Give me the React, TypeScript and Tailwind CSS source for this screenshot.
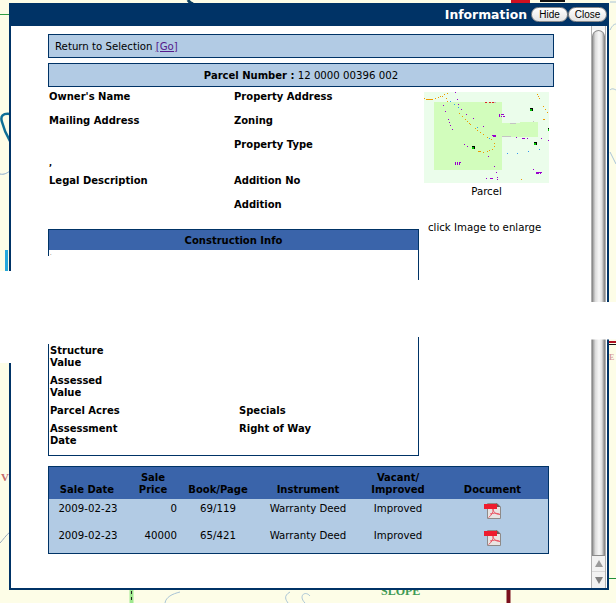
const orangeDots = [[12,28],[46,28],[55,25],[61,22],[67,20],[72,16],[80,13],[88,7],[79,27],[82,37],[118,73],[127,82],[136,91],[142,97],[147,102],[151,106],[166,118],[171,123],[181,130],[190,136],[202,145],[212,151],[223,163],[223,172],[217,180],[208,184],[201,187],[190,190],[349,7],[351,15],[355,22],[358,28],[370,52],[376,61],[382,70],[304,270]];
const purpleDots = [[61,7],[106,10],[112,31],[70,49],[76,67],[85,91],[88,100],[91,109],[97,121],[115,46],[124,61],[139,76],[160,88],[190,112],[133,166],[142,172],[205,202],[223,232],[229,250],[199,268],[232,265],[232,271],[289,145],[322,148],[364,148],[385,154],[340,241]];
const blueDots = [[91,37],[103,46],[115,55],[172,115],[208,148],[262,193],[292,193],[325,187],[358,181]];
const blocks = [[331,61],[384,121],[343,163],[157,175]];
const bars = [
  [18,30,21,"#ee9900"],[174,187,10,"#ee9900"],[369,91,7,"#ee9900"],
  [195,40,6,"#dd2222"],[207,40,6,"#dd2222"],[216,40,6,"#dd2222"],[222,40,6,"#bbbbbb"],
  [270,103,18,"#c4c4c4"],[246,142,27,"#c4c4c4"],[339,97,3,"#c4c4c4"],
  [238,76,3,"#9900cc"],[244,76,9,"#9900cc"],[244,82,3,"#9900cc"],[250,82,6,"#9900cc"],
  [238,79,3,"#9900cc"],[238,82,3,"#9900cc"],
  [217,139,11,"#9900cc"],[220,142,8,"#9900cc"],[306,148,9,"#9900cc"],[211,268,8,"#9900cc"],
  [105,220,3,"#9900cc"],[111,220,3,"#9900cc"],[117,220,6,"#9900cc"],[105,223,3,"#9900cc"],[111,223,3,"#9900cc"],[117,223,3,"#9900cc"],[105,226,3,"#9900cc"],[111,226,3,"#9900cc"],[117,226,3,"#9900cc"],
  [348,250,18,"#9900cc"],[348,253,9,"#9900cc"],[360,253,3,"#9900cc"],
] as const;

// reference dots were read off a 3x crop, so scale them back to whole pixels
const px = (v: number) => Math.round((v - 12) / 3);
const py = (v: number) => Math.round((v - 9) / 3);

function ParcelImage() {
  return (
    <svg width="125" height="91" viewBox="0 0 125 91" shapeRendering="crispEdges" className="block">
      <rect width="125" height="91" fill="#ebfdeb" />
      <path d="M10 10H78V31L114 30V45H78V78H10Z" fill="#d2fdbc" />
      {orangeDots.map(([x, y], i) => <rect key={i} x={px(x)} y={py(y)} width="1" height="1" fill="#ee9900" />)}
      {purpleDots.map(([x, y], i) => <rect key={i} x={px(x)} y={py(y)} width="1" height="1" fill="#9900cc" />)}
      {blueDots.map(([x, y], i) => <rect key={i} x={px(x)} y={py(y)} width="1" height="1" fill="#3399ee" />)}
      {bars.map(([x, y, w, c], i) => <rect key={i} x={px(x)} y={py(y)} width={Math.max(1, Math.round(w / 3))} height="1" fill={c} />)}
      {blocks.map(([x, y], i) => (
        <g key={i}>
          <rect x={px(x)} y={py(y) - 1} width="3" height="3" fill="#000000" />
          <rect x={px(x)} y={py(y)} width="2" height="2" fill="#00cc00" />
        </g>
      ))}
    </svg>
  );
}

function PdfIcon() {
  return (
    <svg width="17" height="17" viewBox="0 0 17 17" className="block mx-auto">
      <path d="M3.500 1.500H13L16.500 5V16.500H3.500Z" fill="#e9e4e2" stroke="#8e8a88" />
      <path d="M12.500 1L16.500 5H12.500Z" fill="#6b5a58" />
      <rect x="0" y="2" width="13" height="5" fill="#ee1c2e" />
      <path d="M9 7C9.500 10 8 13 4.500 15.500M9 7C9 10 12 12.500 16 12.500M6 12C9 11 12 11 15.500 12" fill="none" stroke="#ea5a68" strokeWidth="1" />
    </svg>
  );
}

const sales = [
  { date: "2009-02-23", price: "0", page: "69/119" },
  { date: "2009-02-23", price: "40000", page: "65/421" },
];

export default function App() {
  return (
    <div className="relative w-[616px] h-[603px] overflow-hidden bg-[#fdfde7] font-['DejaVu_Sans',Verdana,sans-serif] text-[10.2px] leading-[12px] text-black">
      {/* map behind the window */}
      <svg className="absolute inset-0" width="616" height="603" viewBox="0 0 616 603" fill="none">
        <path d="M0 14.500H10" stroke="#2f9e44" />
        <path d="M188 0C189 2 190 3 193 4" stroke="#0b3f5f" strokeWidth="3" />
        <path d="M10 114C3 113 0 116 2 122C4 130 7 136 10 141" stroke="#0e6f96" strokeWidth="2.500" />
        <path d="M0 174C4 175 7 173 10 171" stroke="#88aacc" />
        <path d="M6.500 250V272" stroke="#25a7dc" strokeWidth="3" />
        <path d="M0 543C3 540 6 535 10 532" stroke="#99aabb" />
        <path d="M131.500 590V603" stroke="#9fe88f" strokeWidth="4" />
        <path d="M131.500 591V603" stroke="#222222" strokeDasharray="3 3" />
        <path d="M165 603C166 597 172 594 180 592M290 592C283 596 286 600 288 603M305 603C298 596 305 590 310 596" stroke="#a9c4d6" />
        <path d="M508.500 590V603" stroke="#7a0f1c" strokeWidth="4" />
        <path d="M608 578.500H616" stroke="#1f8f3a" />
        <path d="M608 342H616" stroke="#b01020" strokeWidth="2" />
        <path d="M608 344.500H616" stroke="#111111" />
        <path d="M511 1.500H530" stroke="#d01020" strokeWidth="3" />
        <path d="M540 1H565" stroke="#111111" strokeWidth="2" />
        <path d="M610 2H616M610 30C612 26 614 24 616 24M610 90C612 88 614 89 616 90M610 152C612 156 614 160 616 164" stroke="#aac4d8" />
      </svg>
      <span className="absolute left-[1px] top-[471px] font-['Liberation_Serif',serif] font-bold text-[11px] text-[#c46a6a]">V</span>
      <span className="absolute left-[381px] top-[585px] font-['Liberation_Serif',serif] font-bold text-[12px] text-[#3f9a55]">SLOPE</span>
      <span className="absolute left-[609px] top-[352px] font-['Liberation_Serif',serif] font-bold text-[8px] text-[#d69a9a]">E</span>

      {/* window */}
      <div className="absolute left-[9px] top-[3px] w-[600px] h-[587px] flex flex-col bg-white border-x-2 border-b-2 border-[#003366]">
        <div className="h-[23px] shrink-0 bg-[#003366] flex items-center justify-end">
          <span className="font-bold text-[12.400px] text-white mr-[4px]">Information</span>
          <button className="h-[15px] w-[37px] rounded-full border border-[#8a8a8a] bg-gradient-to-b from-white to-[#e4e4e4] font-['Liberation_Sans',sans-serif] text-[10px] leading-[13px] text-black">Hide</button>
          <button className="h-[15px] w-[39px] rounded-full border border-[#8a8a8a] bg-gradient-to-b from-white to-[#e4e4e4] font-['Liberation_Sans',sans-serif] text-[10px] leading-[13px] text-black">Close</button>
        </div>

        <div className="flex-1 flex min-h-0">
          <div className="flex-1 pl-[37px] pt-[8px]">
            <div className="w-[506px] h-[24px] flex items-center px-[6px] pt-[1px] bg-[#b2cbe4] border border-[#003366]">
              <span>Return to Selection <a className="text-[#551a8b] underline">[Go]</a></span>
            </div>
            <div className="w-[506px] h-[24px] mt-[5px] pt-[1px] flex items-center justify-center bg-[#b2cbe4] border border-[#003366]">
              <span><b className="text-[10px]">Parcel Number :</b> 12 0000 00396 002</span>
            </div>

            <div className="flex">
              <div className="w-[371px]">
                <div className="grid grid-cols-[185px_1fr] pl-[1px] pt-[4px] font-bold text-[10px]">
                  <div className="h-[24px]">Owner's Name</div>
                  <div className="h-[24px]">Property Address</div>
                  <div className="h-[24px]">Mailing Address</div>
                  <div className="h-[24px]">Zoning</div>
                  <div className="h-[24px]"></div>
                  <div className="h-[24px]">Property Type</div>
                  <div className="h-[12px] col-span-2 text-[8px] leading-[1px]">,</div>
                  <div className="h-[24px]">Legal Description</div>
                  <div className="h-[24px]">Addition No</div>
                  <div className="h-[24px]"></div>
                  <div className="h-[24px]">Addition</div>
                </div>

                <div className="mt-[6px] border border-[#003366]">
                  <div className="h-[20px] pt-[1px] bg-[#3a64aa] flex items-center justify-center font-bold text-[10px]">Construction Info</div>
                  <div className="relative pt-[95px] pb-[8px] pl-[1px]">
                    <span className="absolute left-[1px] top-[-3px] text-[5px]">.</span>
                    <div className="grid grid-cols-[189px_1fr] gap-y-[6px] font-bold text-[10px]">
                      <div className="w-[72px]">Structure Value</div>
                      <div></div>
                      <div className="w-[72px]">Assessed Value</div>
                      <div></div>
                      <div className="whitespace-nowrap">Parcel Acres</div>
                      <div>Specials</div>
                      <div className="w-[72px]">Assessment Date</div>
                      <div>Right of Way</div>
                    </div>
                  </div>
                </div>
              </div>

              <div className="ml-[5px] pt-[5px] w-[125px]">
                <ParcelImage />
                <div className="mt-[3px] text-center">Parcel</div>
                <div className="mt-[24px] ml-[4px] whitespace-nowrap">click Image to enlarge</div>
              </div>
            </div>

            <table className="mt-[10px] w-[501px] table-fixed border border-[#003366] border-separate border-spacing-0 bg-[#b2cbe4]">
              <thead>
                <tr className="h-[32px] bg-[#3a64aa] text-[10px] text-center align-bottom">
                  <th className="w-[76px] pb-[3px] font-bold">Sale Date</th>
                  <th className="w-[56px] pb-[3px] font-bold">Sale<br />Price</th>
                  <th className="w-[74px] pb-[3px] font-bold">Book/Page</th>
                  <th className="w-[106px] pb-[3px] font-bold">Instrument</th>
                  <th className="w-[74px] pb-[3px] font-bold">Vacant/<br />Improved</th>
                  <th className="pb-[3px] pl-[2px] font-bold">Document</th>
                </tr>
              </thead>
              <tbody>
                {sales.map((s) => (
                  <tr key={s.page} className="h-[27px] align-top">
                    <td className="pt-[4px] pl-[2px] text-center">{s.date}</td>
                    <td className="pt-[4px] pr-[4px] text-right">{s.price}</td>
                    <td className="pt-[4px] text-center">{s.page}</td>
                    <td className="pt-[4px] text-center">Warranty Deed</td>
                    <td className="pt-[4px] text-center">Improved</td>
                    <td className="pt-[3px] pl-[2px]"><PdfIcon /></td>
                  </tr>
                ))}
              </tbody>
            </table>
          </div>

          {/* scrollbar */}
          <div className="w-[15px] shrink-0 flex flex-col mr-px border-x border-[#b0b0b0]">
            <div className="h-[4px] shrink-0 bg-[#f4f4f4]"></div>
            <div className="flex-1 rounded-t-full rounded-b-[7px] border border-[#8c8c8c] bg-[linear-gradient(to_right,#a0a0a0_0%,#dcdcdc_22%,#f8f8f8_55%,#e0e0e0_80%,#969696_100%)]"></div>
            <div className="h-[16px] shrink-0 bg-[#f2f2f2] flex items-center justify-center border-b border-[#d8d8d8]">
              <div className="w-0 h-0 border-x-[4px] border-x-transparent border-b-[7px] border-b-[#9a9a9a]"></div>
            </div>
            <div className="h-[16px] shrink-0 bg-[#f2f2f2] flex items-center justify-center">
              <div className="w-0 h-0 border-x-[4px] border-x-transparent border-t-[7px] border-t-[#7f7f7f]"></div>
            </div>
          </div>
        </div>
      </div>

      {/* blanked-out patch over the page */}
      <svg className="absolute inset-0 pointer-events-none" width="616" height="603" viewBox="0 0 616 603">
        <path d="M0 271H12L47 256H50L419 280L590 302H616V339.500H590L419 337L50 344H47L12 363H0Z" fill="#ffffff" />
      </svg>
    </div>
  );
}
